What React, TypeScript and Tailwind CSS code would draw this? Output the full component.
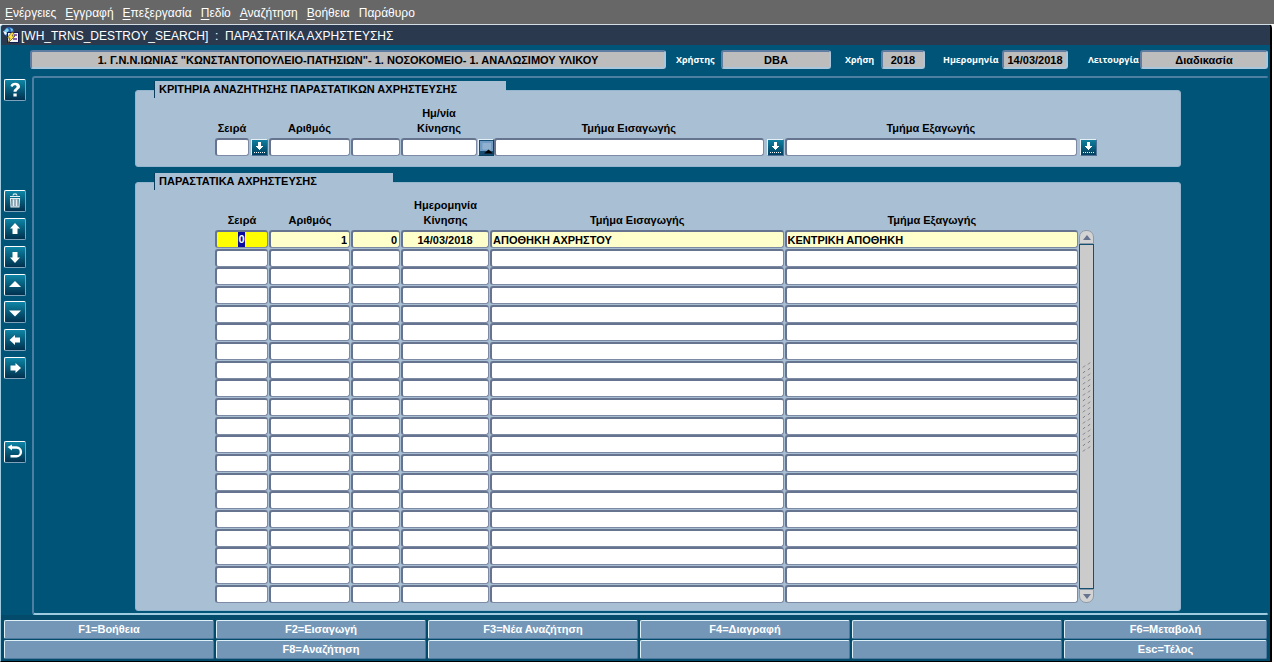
import type { ReactNode } from "react";

const menus = [
  ["Ε", "νέργειες"],
  ["Ε", "γγραφή"],
  ["Ε", "πεξεργασία"],
  ["Π", "εδίο"],
  ["Α", "ναζήτηση"],
  ["Β", "οήθεια"],
  ["", "Παράθυρο"],
];

const functionKeys = [
  "F1=Βοήθεια", "F2=Εισαγωγή", "F3=Νέα Αναζήτηση", "F4=Διαγραφή", "", "F6=Μεταβολή",
  "", "F8=Αναζήτηση", "", "", "", "Esc=Τέλος",
];

const columns = [
  { name: "Σειρά", label: "Σειρά", width: "w-[54px]", align: "text-center" },
  { name: "Αριθμός", label: "Αριθμός", width: "w-[82px]", align: "text-right" },
  { name: "Υποαριθμός", label: "", width: "w-[50px]", align: "text-right" },
  { name: "Ημερομηνία Κίνησης", label: "Ημερομηνία Κίνησης", width: "w-[89px]", align: "text-center" },
  { name: "Τμήμα Εισαγωγής", label: "Τμήμα Εισαγωγής", width: "", align: "text-left" },
  { name: "Τμήμα Εξαγωγής", label: "Τμήμα Εξαγωγής", width: "", align: "text-left" },
];

const firstRow = ["0", "1", "0", "14/03/2018", "ΑΠΟΘΗΚΗ ΑΧΡΗΣΤΟΥ", "ΚΕΝΤΡΙΚΗ ΑΠΟΘΗΚΗ"];
const rows: string[][] = [firstRow, ...Array.from({ length: 19 }, () => ["", "", "", "", "", ""])];

const box =
  "block w-full min-w-0 rounded-[3px] border-t-2 border-l-2 border-r border-b border-t-[#66748f] border-l-[#66748f] border-r-[#7c8aa6] border-b-[#7c8aa6] pr-0.5 pl-px outline-none";

function StatusField({ id, label, value, group, width }: { id: string; label: string; value: string; group: string; width: string }) {
  return (
    <div className={"flex items-center " + group}>
      {label && (
        <label htmlFor={id} className="flex-1 font-['Open_Sans','Liberation_Sans',sans-serif] text-[9px] whitespace-nowrap text-white">
          {label}
        </label>
      )}
      <input
        id={id}
        readOnly
        value={value}
        aria-label={label || "Μονάδα"}
        className={
          "h-[19px] min-w-0 rounded-[3px] border-2 border-t-[#5f7da3] border-l-[#5f7da3] border-r-[#a9c6dc] border-b-[#a9c6dc] bg-[#bdbdbd] text-center text-[11px] text-black outline-none " +
          width
        }
      />
    </div>
  );
}

function ToolButton({ label, gap, children }: { label: string; gap: string; children: ReactNode }) {
  return (
    <button
      aria-label={label}
      className={
        "flex h-[22px] w-[22px] items-center justify-center rounded-[2px] border border-t-white border-l-white border-r-[#7fa3bd] border-b-[#7fa3bd] bg-linear-to-b from-[#0f86a6] to-[#02324f] " +
        gap
      }
    >
      <svg viewBox="0 0 20 20" className="h-5 w-5" fill="white">
        {children}
      </svg>
    </button>
  );
}

function ListButton({ label }: { label: string }) {
  return (
    <button
      type="button"
      aria-label={label}
      className="flex h-[17px] w-[17px] shrink-0 items-center justify-center border border-t-[#e4f0f6] border-l-[#e4f0f6] border-r-[#4f7196] border-b-[#4f7196] bg-linear-to-b from-[#0f7f9e] to-[#034060]"
    >
      <svg viewBox="0 0 13 13" className="h-[13px] w-[13px]" fill="white" shapeRendering="crispEdges">
        <path d="M5 1h3v4h2v1H9v1H8v1H7v1H6V8H5V7H4V6H3V5h2zM1 11h1v1H1zM3 11h1v1H3zM5 11h1v1H5zM7 11h1v1H7zM9 11h1v1H9zM11 11h1v1h-1z" />
      </svg>
    </button>
  );
}

function Criterion({ id, label, name, children }: { id: string; label: string; name?: string; children?: ReactNode }) {
  return (
    <div className="flex items-end">
      <div className="flex min-w-0 flex-1 flex-col">
        <label htmlFor={id} className="pb-0.5 text-center leading-[15px]">
          {label}
        </label>
        <input id={id} aria-label={name} className={box + " h-[18px] bg-white"} />
      </div>
      {children}
    </div>
  );
}

function Panel({ title, tab, className, children }: { title: string; tab: string; className: string; children: ReactNode }) {
  return (
    <section className={"rounded-[3px] border border-[#93b5cd] bg-[#a9bfd3] " + className}>
      <h2
        className={
          "-mt-[10px] ml-[18px] h-[17px] border-l border-[#0b3d5c] bg-[#a9bfd3] pl-1 leading-[17px] whitespace-nowrap " + tab
        }
      >
        {title}
      </h2>
      {children}
    </section>
  );
}

export default function App() {
  return (
    <div className="flex min-h-screen flex-col bg-[#676767] font-['Liberation_Sans',Arial,sans-serif] text-[11px] font-bold text-black">
      <nav className="flex h-6 items-center gap-[9px] pt-0.5 pl-[5px] text-[12px] font-normal text-white">
        {menus.map(([key, rest]) => (
          <button key={key + rest}>
            <span className="underline underline-offset-2">{key}</span>
            {rest}
          </button>
        ))}
      </nav>

      <div className="flex flex-1 flex-col bg-white pr-[2px]">
        <main className="flex flex-1 flex-col rounded-t-[4px] border-t border-r-2 border-b border-l border-t-[#d5dde4] border-r-black border-b-black border-l-[#9fcbe0] bg-[#005478]">
          <header className="flex h-5 items-center gap-0.5 rounded-t-[3px] bg-[#2b394f] pl-0.5 text-white">
            <svg viewBox="0 0 16 16" className="h-4 w-4">
              <circle cx="6" cy="5" r="5" fill="#2a62b8" />
              <path d="M1 4l3-3 2 2-2 3zM7 1l3 1-1 3z" fill="#7fd3e8" />
              <path d="M0 4l3 1 1 2-2 1z" fill="#f4f8fa" />
              <path d="M4 5h12v11H4z" fill="#111c50" />
              <path d="M5 6h10v9H5z" fill="#f2f2f2" />
              <path d="M11 7h3v2h-3zM10 11h4v2h-4z" fill="#8a5fae" />
              <path d="M9 5l-5 6h3l-2 5 7-7H9l2-3z" fill="#ffe24a" stroke="#3b2b10" strokeWidth=".6" />
            </svg>
            <h1 className="pt-px text-[12px] font-normal whitespace-pre">[WH_TRNS_DESTROY_SEARCH]  :  ΠΑΡΑΣΤΑΤΙΚΑ ΑΧΡΗΣΤΕΥΣΗΣ</h1>
          </header>

          <div className="flex h-[31px] items-center pr-[2px] pb-0.5 pl-[29px]">
            <StatusField id="unit" label="" value={'1. Γ.Ν.Ν.ΙΩΝΙΑΣ "ΚΩΝΣΤΑΝΤΟΠΟΥΛΕΙΟ-ΠΑΤΗΣΙΩΝ"- 1. ΝΟΣΟΚΟΜΕΙΟ- 1. ΑΝΑΛΩΣΙΜΟΥ ΥΛΙΚΟΥ'} group="flex-1" width="w-full" />
            <StatusField id="user" label="Χρήστης" value="DBA" group="ml-[10px] w-[155px]" width="w-[110px]" />
            <StatusField id="year" label="Χρήση" value="2018" group="ml-3.5 w-20" width="w-11" />
            <StatusField id="today" label="Ημερομηνία" value="14/03/2018" group="ml-[18px] w-[125px]" width="w-[66px]" />
            <StatusField id="mode" label="Λειτουργία" value="Διαδικασία" group="ml-5 w-[180px]" width="w-32" />
          </div>

          <div className="flex flex-1">
            <aside className="flex w-[31px] shrink-0 flex-col pt-[3px] pl-[3px]">
              <ToolButton label="Βοήθεια" gap="">
                <path d="M5.500 6C6 3.800 8 2.800 10.200 2.800c2.800 0 4.800 1.400 4.800 3.700 0 2.900-3.400 3-3.400 5.300H8.500c0-3.200 3.100-3.500 3.100-5.100 0-.900-.600-1.400-1.600-1.400-1.200 0-2 .600-2.500 1.700zM8.400 13.400h3.300V16.600H8.400z" />
              </ToolButton>
              <ToolButton label="Διαγραφή" gap="mt-[89px]">
                <path d="M6.500 7.500h7V16h-7z" fill="#8fa9b8" />
                <path d="M8 4.500a2 1.600 0 0 1 4 0M5 5.500h10M5.500 7.500h9l-.500 8.500H6zM8.500 8.500v6.500M11.500 8.500v6.500" fill="none" stroke="#e6eef2" strokeWidth="1.100" />
              </ToolButton>
              <ToolButton label="Προηγούμενη εγγραφή" gap="mt-1.5">
                <path d="M10 4l5 5.500h-2.500V15h-5V9.500H5z" />
              </ToolButton>
              <ToolButton label="Επόμενη εγγραφή" gap="mt-1.5">
                <path d="M10 16l5-5.500h-2.500V5h-5v5.500H5z" />
              </ToolButton>
              <ToolButton label="Προηγούμενη σελίδα" gap="mt-1.5">
                <path d="M10 6l6 6H4z" />
              </ToolButton>
              <ToolButton label="Επόμενη σελίδα" gap="mt-[5px]">
                <path d="M10 14.500l6-6H4z" />
              </ToolButton>
              <ToolButton label="Προηγούμενο πεδίο" gap="mt-1.5">
                <path d="M4.500 10L10 5v2.500h5v5h-5V15z" />
              </ToolButton>
              <ToolButton label="Επόμενο πεδίο" gap="mt-1.5">
                <path d="M16 10l-5.500-5v2.500h-5v5h5V15z" />
              </ToolButton>
              <ToolButton label="Επιστροφή" gap="mt-[62px]">
                <path d="M5 5.500h6.500a4.200 4.200 0 0 1 0 8.800H5.500" fill="none" stroke="white" strokeWidth="2.400" />
                <path d="M2.500 5L7 2.500v6z" />
              </ToolButton>
            </aside>

            <div className="mr-[1px] flex-1 rounded-[3px] border-2 border-t-[#4d7fa3] border-r-transparent border-b-[#9fcbe0] border-l-[#4d7fa3] pt-3 pr-[86px] pb-[2px] pl-[101px]">
              <Panel title="ΚΡΙΤΗΡΙΑ ΑΝΑΖΗΤΗΣΗΣ ΠΑΡΑΣΤΑΤΙΚΩΝ ΑΧΡΗΣΤΕΥΣΗΣ" tab="w-[352px]" className="pb-[10px]">
                <form className="mt-[8px] grid grid-cols-[54px_82px_50px_93px_291fr_294fr_102px] items-end pl-[79px]">
                  <Criterion id="series" label="Σειρά">
                    <div className="pr-px pl-0.5"><ListButton label="Λίστα σειρών" /></div>
                  </Criterion>
                  <div className="pr-px"><Criterion id="number" label="Αριθμός" /></div>
                  <div className="pr-px"><Criterion id="subnumber" label="" name="Υποαριθμός" /></div>
                  <Criterion id="date" label="Ημ/νία Κίνησης">
                    <button aria-label="Ημερολόγιο" type="button" className="ml-px flex h-[17px] w-4 shrink-0 items-center justify-center border border-t-[#e4f0f6] border-l-[#e4f0f6] border-r-[#0b4263] border-b-[#0b4263] bg-[#164d73]">
                      <svg viewBox="0 0 13 13" className="h-[13px] w-[13px]">
                        <path d="M0 0h13v10H0z" fill="#6f9bc4" />
                        <path d="M2 3h9M2 5h9M2 7h9M4 2v7M6 2v7M8 2v7M10 2v7" stroke="#a9c2d8" strokeWidth=".7" />
                        <path d="M4 12.500l4.500-4 4.500 4z" fill="#000" />
                      </svg>
                    </button>
                  </Criterion>
                  <Criterion id="dept-in" label="Τμήμα Εισαγωγής">
                    <div className="pr-px pl-[3px]"><ListButton label="Λίστα τμημάτων εισαγωγής" /></div>
                  </Criterion>
                  <div className="pr-px"><Criterion id="dept-out" label="Τμήμα Εξαγωγής" /></div>
                  <div className="pl-0.5"><ListButton label="Λίστα τμημάτων εξαγωγής" /></div>
                </form>
              </Panel>

              <Panel title="ΠΑΡΑΣΤΑΤΙΚΑ ΑΧΡΗΣΤΕΥΣΗΣ" tab="w-[239px]" className="mt-[15px] pb-[7px]">
                <div className="mt-[8px] flex pr-[86px] pl-[79px]">
                  <table className="min-w-0 flex-1 table-fixed border-collapse">
                    <thead>
                      <tr>
                        {columns.map((c) => (
                          <th key={c.name} scope="col" className={"px-2 pb-0.5 align-bottom leading-[15px] " + c.width}>
                            {c.label}
                          </th>
                        ))}
                      </tr>
                    </thead>
                    <tbody>
                      {rows.map((row, r) => (
                        <tr key={r} className={r % 3 === 1 ? "h-[18px]" : "h-[19px]"}>
                          {columns.map((c, i) => (
                            <td key={c.name} className="p-0 pr-px align-top">
                              {r === 0 && i === 0 ? (
                                <div className={box + " flex h-[18px] items-center justify-center bg-[#ffff00]"}>
                                  <span className="bg-[#0a0a9c] leading-[15px] text-white">0</span>
                                </div>
                              ) : (
                                <input
                                  aria-label={c.name + " " + (r + 1)}
                                  defaultValue={row[i]}
                                  className={box + " h-[18px] " + c.align + (r === 0 ? " bg-[#ffffcc]" : " bg-white")}
                                />
                              )}
                            </td>
                          ))}
                        </tr>
                      ))}
                    </tbody>
                  </table>
                  <div className="mt-8 flex w-[15px] flex-col">
                    <button aria-label="Κύλιση πάνω" className="flex h-[14px] items-center justify-center rounded-t-[7px] border border-[#8f9aa8] bg-[#d3d3d3]">
                      <svg viewBox="0 0 8 5" className="h-[5px] w-2"><path d="M4 0l4 5H0z" fill="#66748f" /></svg>
                    </button>
                    <div className="flex flex-1 justify-center border border-[#14506f] bg-[#cbcbcb] pt-[117px]">
                      <svg viewBox="0 0 9 92" className="h-[92px] w-[9px]" stroke="#777b85">
                        {Array.from({ length: 16 }, (_, i) => (
                          <path key={i} d={`M1 ${i * 5.6 + 5.5}l2-2M6 ${i * 5.6 + 2.5}l2-2`} />
                        ))}
                      </svg>
                    </div>
                    <button aria-label="Κύλιση κάτω" className="flex h-[14px] items-center justify-center rounded-b-[7px] border border-[#8f9aa8] bg-[#d3d3d3]">
                      <svg viewBox="0 0 8 5" className="h-[5px] w-2"><path d="M4 5l4-5H0z" fill="#66748f" /></svg>
                    </button>
                  </div>
                </div>
              </Panel>
            </div>
          </div>

          <footer className="grid grid-cols-[repeat(5,210fr)_203fr] gap-x-0.5 gap-y-px bg-[#044a6b] pt-[5px] pr-[3px] pb-[2px] pl-[3px]">
            {functionKeys.map((label, i) => (
              <button
                key={i}
                aria-label={label || "Κενό πλήκτρο"}
                className="h-[19px] rounded-[2px] border border-t-[#dff0f8] border-r-[#4f7aa0] border-b-[#4f7aa0] border-l-[#dff0f8] bg-[#7497b8] leading-[17px] text-white"
              >
                {label}
              </button>
            ))}
          </footer>
        </main>
      </div>
    </div>
  );
}
